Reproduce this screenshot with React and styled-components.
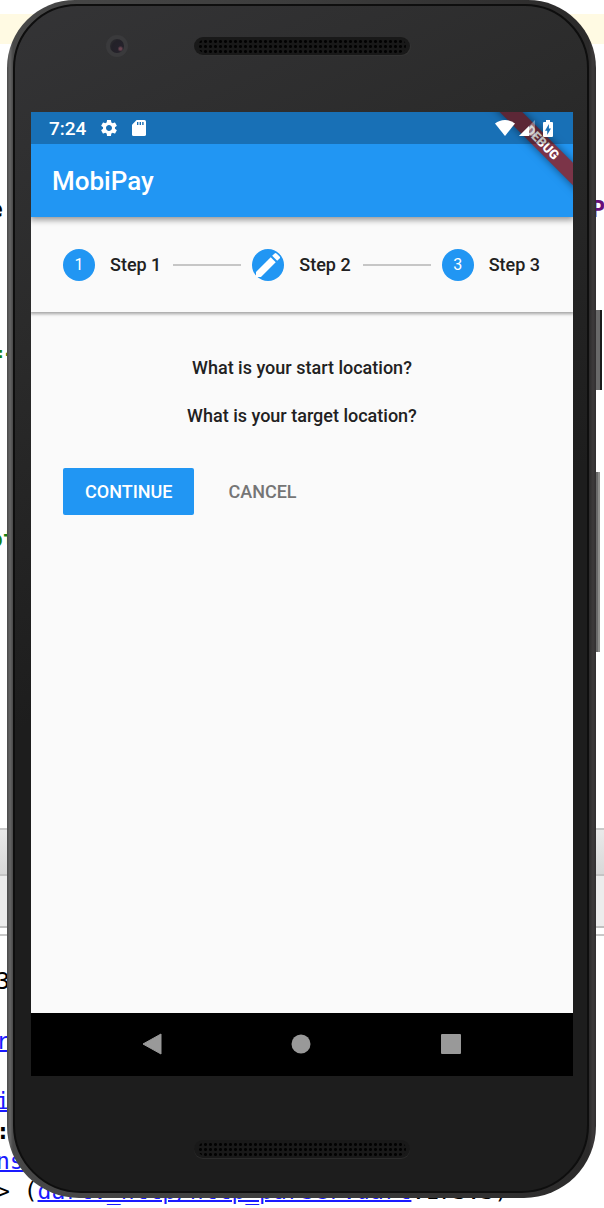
import React from "react";
import styled, { createGlobalStyle, css } from "styled-components";

const blue = "#2196f3";

const GlobalStyle = createGlobalStyle`
  *, *::before, *::after { box-sizing: border-box; }
  body { margin: 0; background: #fff; font-family: Roboto, "Liberation Sans", sans-serif; }
  p, h1, ol { margin: 0; padding: 0; }
  svg { display: block; }
`;

const Page = styled.div`
  position: relative;
  display: flex;
  min-height: 100vh;
  padding: 0 8px 10px 7px;
  overflow: hidden;
`;

/* Editor window behind the emulator */
const Backdrop = styled.div`
  position: absolute;
  inset: 0;
  overflow: hidden;
  padding-top: 14px;
  font: 23px/30px "DejaVu Sans Mono", "Liberation Mono", monospace;
  color: #000;
  white-space: pre;
`;

const CodeArea = styled.div`
  height: 814px;
`;

const ActiveLine = styled.div`
  height: 30px;
  background: #fffae3;
`;

const CodeLine = styled.div`
  display: flex;
  justify-content: space-between;
  height: 30px;
  margin: ${(p) => p.$gap}px -1px 0 -11px;
  color: ${(p) => p.$color || "#000"};
  font-weight: bold;
`;

const Field = styled.span`
  color: #660e7a;
`;

const Tabs = styled.div`
  height: 46px;
  border-top: 2px solid #c8c8c8;
  background: linear-gradient(#e9e9e9, #d8d8d8);
`;

const Tools = styled.div`
  height: 54px;
  border-top: 2px solid #c4c4c4;
  border-bottom: 2px solid #c0c0c0;
  background: #ececec;
`;

const Console = styled.div`
  margin-top: 6px;
  padding-top: 30px;
  border-top: 2px solid #c8c8c8;
`;

const ConsoleLine = styled.div`
  height: 30px;
  margin-left: -4px;
  font-weight: ${(p) => (p.$bold ? "bold" : "normal")};
`;

const SourceLink = styled.a`
  color: #1a1aff;
  text-decoration: underline;
  text-decoration-thickness: 2px;
`;

/* Phone */
const Device = styled.div`
  position: relative;
  flex: 1;
  display: flex;
  padding: 4px 7px 5px 6px;
  border-radius: 68px 68px 72px 72px;
  background: linear-gradient(90deg, #4a4a4a, #666 3px, #484848 6px, #3c3c3c 50%, #2b2a2a calc(100% - 7px), #3d3a3b calc(100% - 3px), #302e2f);
`;

const SideKey = styled.span`
  position: absolute;
  left: 100%;
  top: ${(p) => p.$top}px;
  width: ${(p) => p.$width}px;
  height: ${(p) => p.$height}px;
  border-right: 2px solid ${(p) => p.$edge};
  background: #696969;
`;

const Body = styled.div`
  flex: 1;
  display: flex;
  flex-direction: column;
  padding: 0 14px 0 16px;
  border: 2px solid #0e0e0e;
  border-radius: 64px 64px 68px 68px;
  background: linear-gradient(155deg, #343436, #2b2b2b 22%, #1d1d1d 50%, #1d1d1d);
`;

const TopBezel = styled.div`
  display: grid;
  grid-template-columns: 1fr 216px 1fr;
  align-items: start;
  height: 106px;
  padding-top: 31px;
`;

const BottomBezel = styled.div`
  display: flex;
  justify-content: center;
  height: 115px;
  padding-top: 64px;
`;

const Camera = styled.span`
  justify-self: end;
  width: 22px;
  height: 22px;
  margin: -2px 66px 0 0;
  border: 4px solid #3a3a3c;
  border-radius: 50%;
  background: radial-gradient(circle at 75% 70%, #6a4450 0 1px, #25222b 3px, #232128 60%, #333);
`;

const Speaker = styled.span`
  display: block;
  width: 216px;
  height: 18px;
  padding: 2px 4px;
  border-radius: 9px;
  background: #191919;
  box-shadow: ${(p) => (p.$dim ? "0 1px 0 #2c2c2c" : "1px 1px 0 #333")};

  &::before {
    content: "";
    display: block;
    height: 14px;
    border-radius: 7px;
    background: radial-gradient(circle, #020202 0 1px, #191919 2px) 0 0 / 5px 5px;
  }
`;

const Screen = styled.main`
  flex: 1;
  display: flex;
  flex-direction: column;
  overflow: hidden;
  background: #fafafa;
`;

const TopArea = styled.header`
  position: relative;
  z-index: 2;
  flex: none;
  background: ${blue};
  box-shadow: 0 2px 6px 1px rgba(0, 0, 0, 0.4);
`;

const RibbonClip = styled.div`
  position: absolute;
  inset: 0;
  overflow: hidden;
  pointer-events: none;
`;

const Ribbon = styled.div`
  position: absolute;
  top: 23px;
  right: -49px;
  width: 160px;
  height: 16px;
  transform: rotate(45deg);
  background: #7b3448;
  box-shadow: 0 0 9px rgba(0, 0, 0, 0.5);
  color: #fff;
  font-size: 13px;
  font-weight: 900;
  line-height: 16px;
  text-align: center;
`;

const StatusBar = styled.div`
  position: relative;
  z-index: 1;
  display: flex;
  align-items: center;
  justify-content: space-between;
  height: 32px;
  padding: 0 20px 0 18px;
  background: rgba(0, 0, 0, 0.25);
  color: #fff;
  font-size: 19px;
  font-weight: 500;
`;

const StatusGroup = styled.div`
  display: flex;
  align-items: center;
  gap: ${(p) => p.$gap}px;
`;

const AppBar = styled.div`
  display: flex;
  align-items: center;
  height: 73px;
  padding: 0 21px;
`;

const Title = styled.h1`
  color: #fff;
  font-size: 26px;
  font-weight: 500;
  line-height: 32px;
`;

const Steps = styled.ol`
  position: relative;
  z-index: 1;
  display: flex;
  align-items: center;
  flex: none;
  height: 95px;
  && {
    padding: 0 33px 0 32px;
  }
  list-style: none;
  background: #fafafa;
  box-shadow: 0 1px 3px 1px rgba(0, 0, 0, 0.35);
`;

const Step = styled.li`
  display: flex;
  align-items: center;
  gap: 15px;
  color: #212121;
  font-size: 18px;
  font-weight: 500;
  white-space: nowrap;
`;

const Badge = styled.span`
  display: grid;
  place-items: center;
  width: 32px;
  height: 32px;
  border-radius: 50%;
  background: ${blue};
  color: #fff;
  font-size: 16px;
  font-weight: 400;
`;

const Connector = styled.li`
  flex: 1;
  height: 2px;
  margin: 0 11px 0 12px;
  background: #c6c6c6;
`;

const StepContent = styled.section`
  flex: 1;
  padding: 44px 32px;
`;

const Questions = styled.div`
  display: grid;
  gap: 24px;
  margin-bottom: 40px;
  color: #212121;
  font-size: 18px;
  font-weight: 500;
  line-height: 24px;
  text-align: center;
`;

const Actions = styled.div`
  display: flex;
  gap: 12px;
`;

const Button = styled.button`
  height: 47px;
  padding: 0 22px;
  border: 0;
  border-radius: 2px;
  font: 500 18px/24px Roboto, "Liberation Sans", sans-serif;
  ${(p) =>
    p.$primary
      ? css`
          background: ${blue};
          color: #fff;
        `
      : css`
          background: transparent;
          color: #757575;
        `}
`;

const NavBar = styled.nav`
  display: grid;
  grid-template-columns: repeat(3, 1fr);
  flex: none;
  height: 63px;
  padding: 0 47px 2px 46px;
  background: #000;
`;

const NavButton = styled.button`
  display: grid;
  place-items: center;
  padding: 0;
  border: 0;
  background: none;
`;

const Gear = () => (
  <svg width="20" height="20" viewBox="0 0 24 24" fill="#fff" aria-hidden="true">
    <path d="M19.14 12.94c.04-.3.06-.61.06-.94 0-.32-.02-.64-.07-.94l2.03-1.58a.49.49 0 0 0 .12-.61l-1.92-3.32a.488.488 0 0 0-.59-.22l-2.39.96c-.5-.38-1.03-.7-1.62-.94l-.36-2.54a.484.484 0 0 0-.48-.41h-3.84c-.24 0-.43.17-.47.41l-.36 2.54c-.59.24-1.13.57-1.62.94l-2.39-.96c-.22-.08-.47 0-.59.22L2.74 8.87c-.12.21-.08.47.12.61l2.03 1.58c-.05.3-.09.63-.09.94s.02.64.07.94l-2.03 1.58a.49.49 0 0 0-.12.61l1.92 3.32c.12.22.37.29.59.22l2.39-.96c.5.38 1.03.7 1.62.94l.36 2.54c.05.24.24.41.48.41h3.84c.24 0 .44-.17.47-.41l.36-2.54c.59-.24 1.13-.56 1.62-.94l2.39.96c.22.08.47 0 .59-.22l1.92-3.32c.12-.22.07-.47-.12-.61l-2.01-1.58zM12 15.6c-1.98 0-3.6-1.62-3.6-3.6s1.62-3.6 3.6-3.6 3.6 1.62 3.6 3.6-1.62 3.6-3.6 3.6z" />
  </svg>
);

const SdCard = () => (
  <svg width="14" height="16" viewBox="0 0 14 16" aria-hidden="true">
    <path fill="#fff" d="M4.6 0H12.4Q14 0 14 1.6V14.4Q14 16 12.4 16H1.6Q0 16 0 14.4V4.8z" />
    <path stroke="#1970b6" strokeWidth="1.4" d="M5.7 2v3M8.3 2v3M10.9 2v3" />
  </svg>
);

const Wifi = () => (
  <svg width="20" height="16" viewBox="0 0 20 16" aria-hidden="true">
    <path fill="#fff" d="M0 3.6Q4.4 0 10 0T20 3.6L10 16z" />
  </svg>
);

const Signal = () => (
  <svg width="16" height="16" viewBox="0 0 16 16" aria-hidden="true">
    <path fill="#fff" fillOpacity=".35" d="M16 0V16H0z" />
    <path fill="#fff" d="M10 6V16H0z" />
  </svg>
);

const Battery = () => (
  <svg width="10" height="17" viewBox="0 0 10 17" aria-hidden="true">
    <path fill="#fff" d="M3 0H7V2H9Q10 2 10 3V16Q10 17 9 17H1Q0 17 0 16V3Q0 2 1 2H3z" />
    <path fill="#1970b6" d="M5.9 4V8.4H8L4.2 15V10.8H2z" />
  </svg>
);

const Pencil = () => (
  <svg width="32" height="32" viewBox="0 0 24 24" fill="#fff" aria-label="Editing">
    <path d="M3 17.25V21h3.75L17.81 9.94l-3.75-3.75L3 17.25zM20.71 7.04a.996.996 0 0 0 0-1.41l-2.34-2.34a.996.996 0 0 0-1.41 0l-1.83 1.83 3.75 3.75 1.83-1.83z" />
  </svg>
);

export default function App() {
  return (
    <Page>
      <GlobalStyle />
      <Backdrop>
        <CodeArea>
          <ActiveLine />
          <CodeLine $gap={150}>
            <span>e</span>
            <Field>P</Field>
          </CodeLine>
          <CodeLine $gap={114} $color="#128012">=-</CodeLine>
          <CodeLine $gap={156} $color="#128012">ot</CodeLine>
        </CodeArea>
        <Tabs />
        <Tools />
        <Console>
          <ConsoleLine>3</ConsoleLine>
          <ConsoleLine />
          <ConsoleLine>
            <SourceLink href="#r">r</SourceLink>
          </ConsoleLine>
          <ConsoleLine />
          <ConsoleLine>
            <SourceLink href="#i">i</SourceLink>
          </ConsoleLine>
          <ConsoleLine $bold>:</ConsoleLine>
          <ConsoleLine>
            <SourceLink href="#ns">ns</SourceLink>
          </ConsoleLine>
          <ConsoleLine>
            {"> ("}
            <SourceLink href="#parser">dart:_http/http_parser.dart</SourceLink>
            :173:3)
          </ConsoleLine>
        </Console>
      </Backdrop>

      <Device>
        <SideKey $top={310} $width={6} $height={80} $edge="#1c1c1c" />
        <SideKey $top={472} $width={4} $height={180} $edge="#8c8c8a" />
        <Body>
          <TopBezel>
            <Camera />
            <Speaker />
          </TopBezel>

          <Screen>
            <TopArea>
              <RibbonClip>
                <Ribbon>DEBUG</Ribbon>
              </RibbonClip>
              <StatusBar>
                <StatusGroup $gap={13}>
                  <span>7:24</span>
                  <Gear />
                  <SdCard />
                </StatusGroup>
                <StatusGroup $gap={4}>
                  <Wifi />
                  <Signal />
                  <span />
                  <Battery />
                </StatusGroup>
              </StatusBar>
              <AppBar>
                <Title>MobiPay</Title>
              </AppBar>
            </TopArea>

            <Steps>
              <Step>
                <Badge>1</Badge>
                <span>Step 1</span>
              </Step>
              <Connector aria-hidden="true" />
              <Step>
                <Badge>
                  <Pencil />
                </Badge>
                <span>Step 2</span>
              </Step>
              <Connector aria-hidden="true" />
              <Step>
                <Badge>3</Badge>
                <span>Step 3</span>
              </Step>
            </Steps>

            <StepContent>
              <Questions>
                <p>What is your start location?</p>
                <p>What is your target location?</p>
              </Questions>
              <Actions>
                <Button type="button" $primary>
                  CONTINUE
                </Button>
                <Button type="button">CANCEL</Button>
              </Actions>
            </StepContent>

            <NavBar>
              <NavButton type="button" aria-label="Back">
                <svg width="20" height="22" viewBox="0 0 20 22" fill="#999">
                  <path d="M19 1V21L1 11z" stroke="#999" strokeLinejoin="round" />
                </svg>
              </NavButton>
              <NavButton type="button" aria-label="Home">
                <svg width="20" height="20" viewBox="0 0 20 20" fill="#999">
                  <circle cx="10" cy="10" r="9.5" />
                </svg>
              </NavButton>
              <NavButton type="button" aria-label="Overview">
                <svg width="20" height="20" viewBox="0 0 20 20" fill="#999">
                  <rect width="20" height="20" rx="1" />
                </svg>
              </NavButton>
            </NavBar>
          </Screen>

          <BottomBezel>
            <Speaker $dim />
          </BottomBezel>
        </Body>
      </Device>
    </Page>
  );
}
